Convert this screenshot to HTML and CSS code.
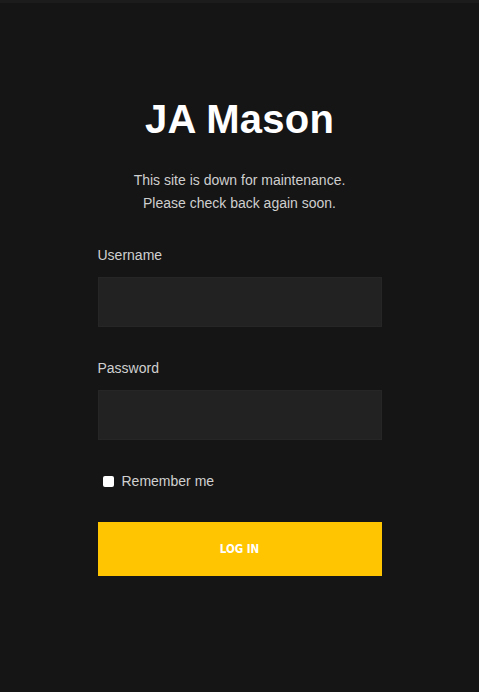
FILE: index.html
```html
<!DOCTYPE html>
<html lang="en">
<head>
<meta charset="utf-8">
<title>JA Mason</title>
<link rel="stylesheet" href="styles.css">
</head>
<body>
<div class="topbar"></div>
<main class="wrap">
  <h1 class="title">JA Mason</h1>
  <p class="notice">This site is down for maintenance.<br>Please check back again soon.</p>
  <form class="form">
    <div class="field">
      <label class="label" for="u">Username</label>
      <input class="input" id="u" type="text">
    </div>
    <div class="field">
      <label class="label" for="p">Password</label>
      <input class="input" id="p" type="password">
    </div>
    <label class="remember"><input class="check" type="checkbox"><span>Remember me</span></label>
    <button class="btn" type="button">LOG IN</button>
  </form>
</main>
</body>
</html>
```
FILE: styles.css
```css
html, body {
  margin: 0;
  padding: 0;
  background: #151515;
}
body {
  font-family: "Liberation Sans", Arial, sans-serif;
  color: #cfcfcf;
}
.topbar {
  height: 3px;
  background: #1c1c1c;
}
.wrap {
  width: 284px;
  margin: 0 auto;
  padding-top: 92px;
}
.title {
  margin: 0;
  font-size: 40px;
  line-height: 48px;
  font-weight: 700;
  color: #ffffff;
  text-align: center;
  letter-spacing: 0.2px;
}
.notice {
  margin: 26px 0 0;
  font-size: 14px;
  line-height: 23px;
  text-align: center;
  color: #cfcfcf;
}
.form {
  margin-top: 30px;
  display: flex;
  flex-direction: column;
  gap: 31px;
}
.field {
  display: flex;
  flex-direction: column;
  gap: 11px;
}
.label {
  font-size: 14px;
  line-height: 21px;
  color: #d0d0d0;
}
.input {
  box-sizing: border-box;
  height: 50px;
  width: 100%;
  margin: 0;
  background: #222222;
  border: 1px solid #262626;
  border-radius: 0;
  outline: none;
  color: #fff;
  padding: 0 12px;
}
.remember {
  display: flex;
  align-items: center;
  height: 20px;
  font-size: 14px;
  color: #d0d0d0;
}
.check {
  appearance: none;
  -webkit-appearance: none;
  width: 11px;
  height: 11px;
  margin: 0 8px 0 5px;
  background: #ffffff;
  border-radius: 2px;
  border: none;
}
.btn {
  height: 54px;
  width: 100%;
  border: none;
  margin: 0;
  background: #ffc500;
  color: #ffffff;
  font-family: "DejaVu Sans Condensed", "DejaVu Sans", sans-serif;
  font-stretch: condensed;
  font-weight: 700;
  font-size: 11.5px;
  letter-spacing: 0;
  cursor: pointer;
}
```
